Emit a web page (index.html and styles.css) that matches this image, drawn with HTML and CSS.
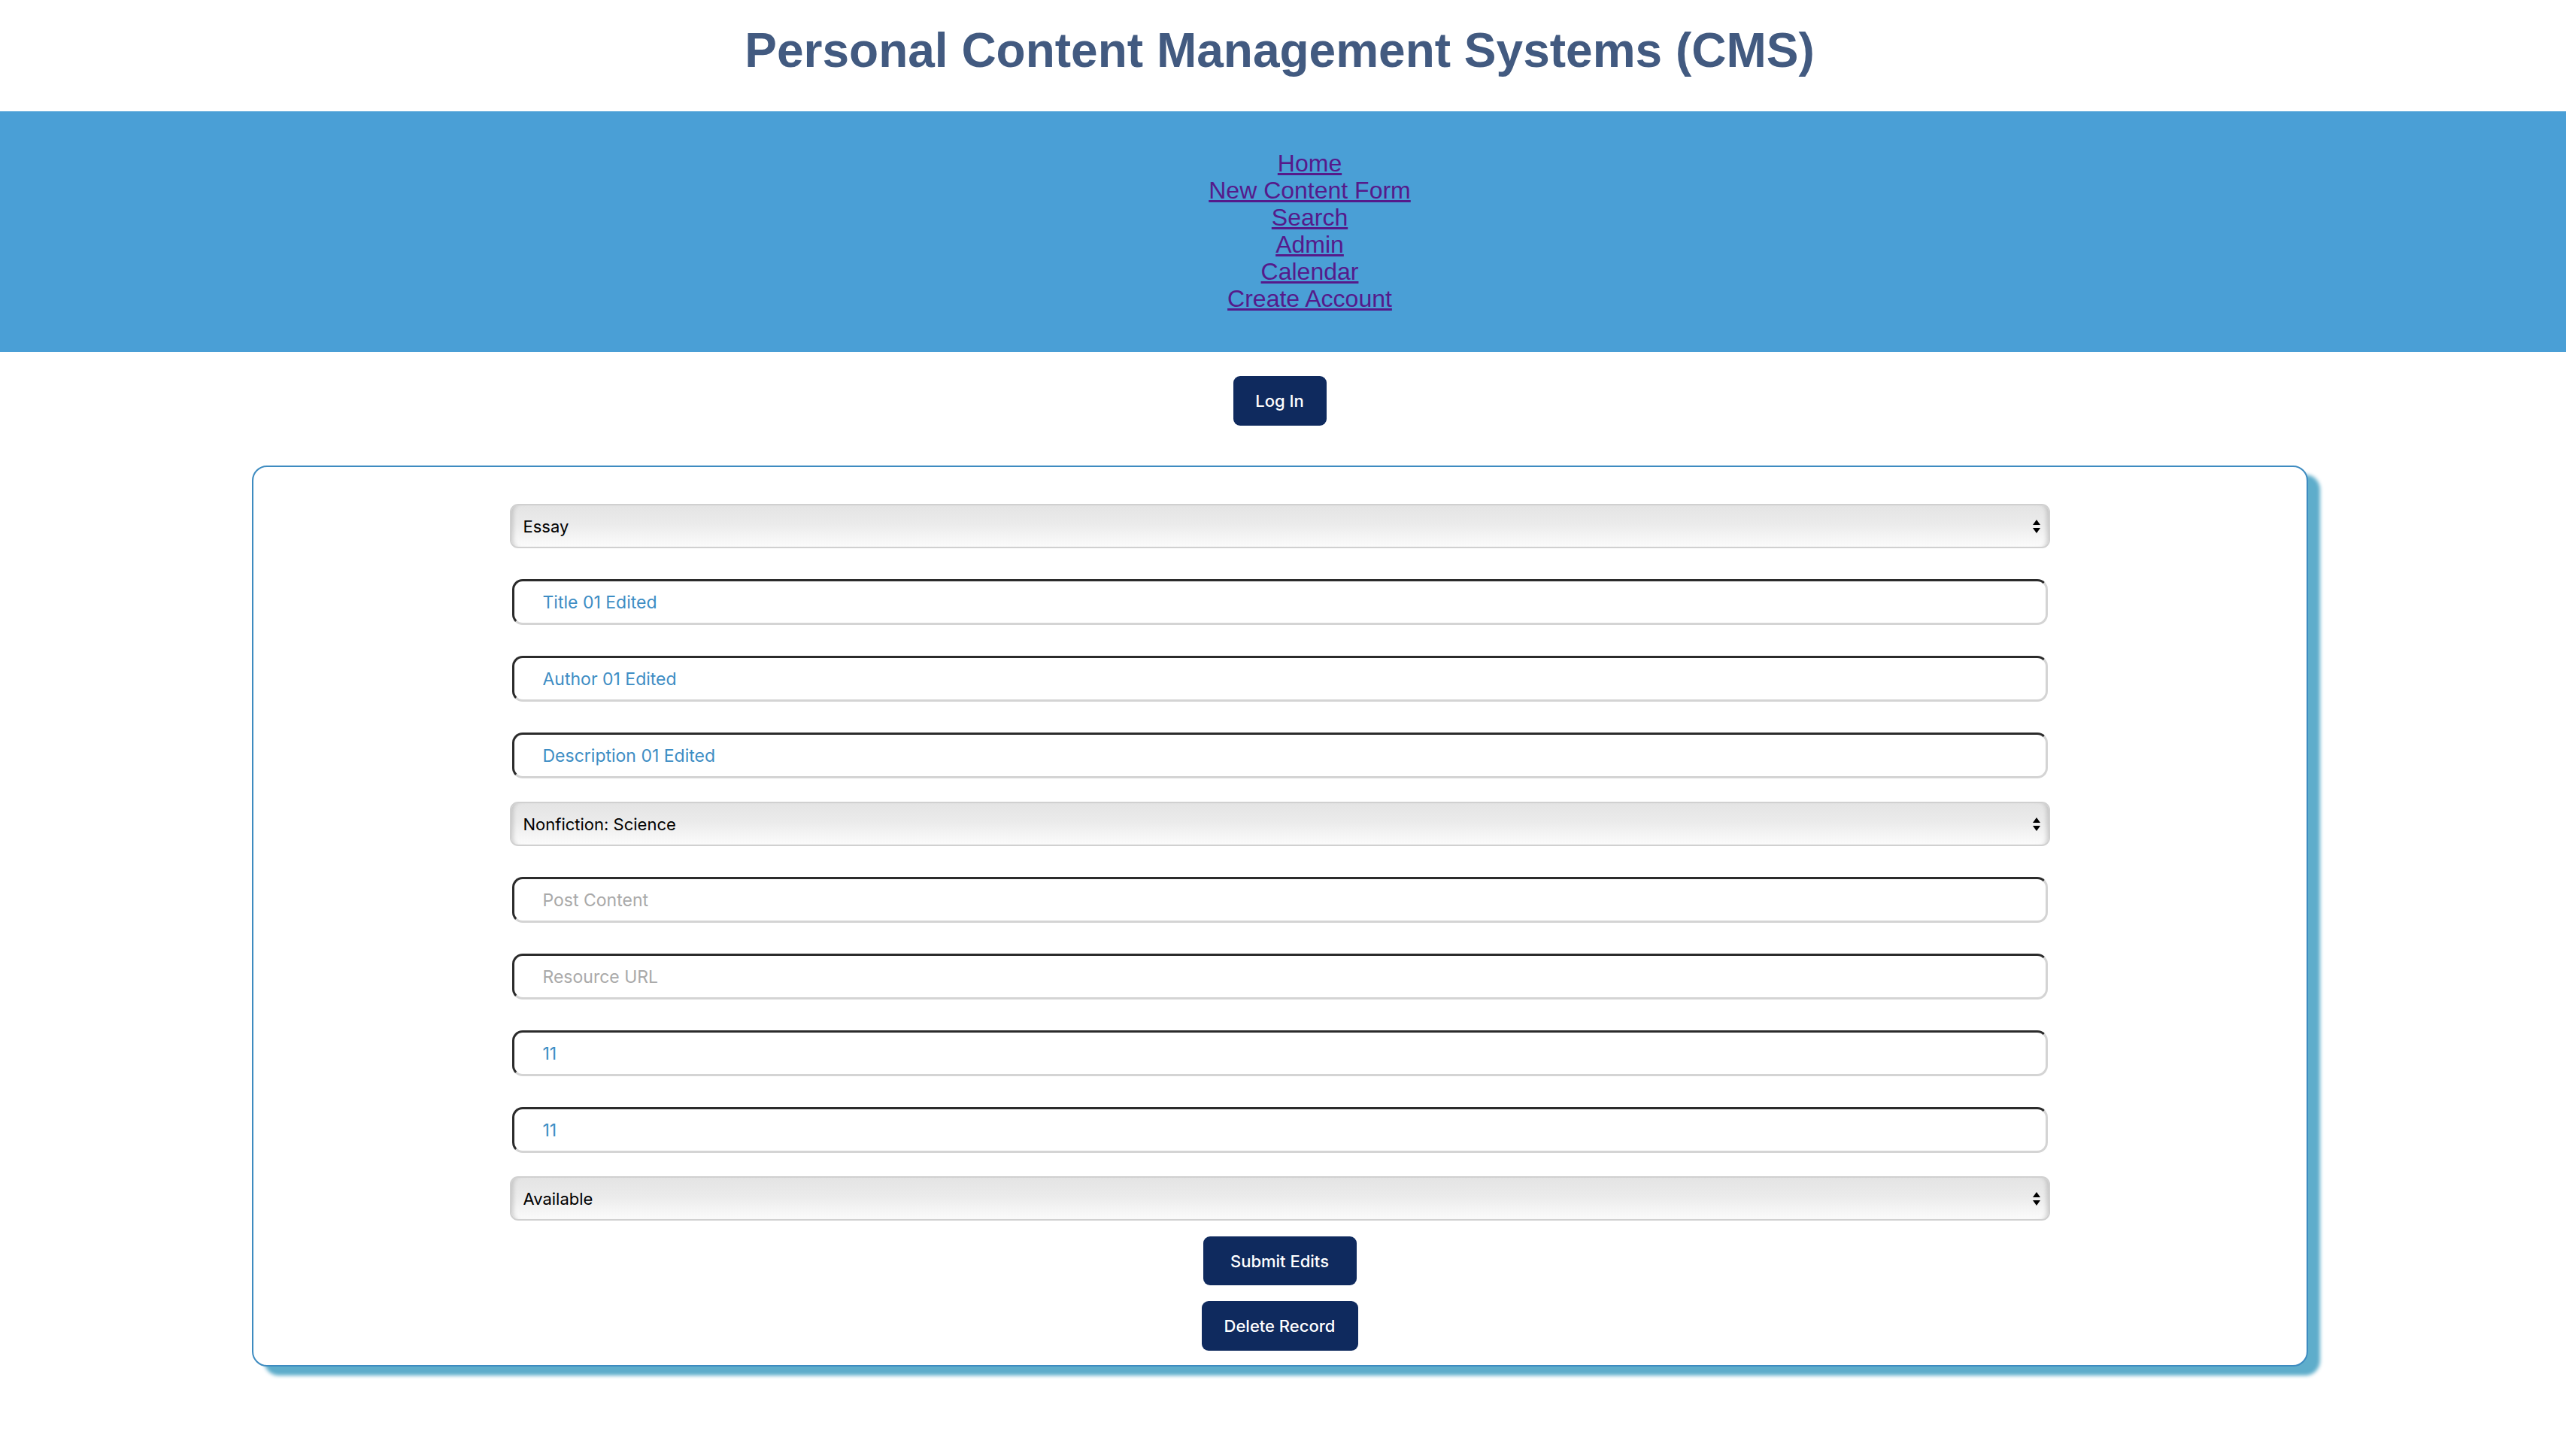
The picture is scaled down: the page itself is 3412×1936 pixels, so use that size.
FILE: index.html
```html
<!DOCTYPE html>
<html lang="en">
<head>
<meta charset="utf-8">
<title>Personal Content Management Systems (CMS)</title>
<link rel="stylesheet" href="styles.css">
</head>
<body>
<div class="page">
  <h1 class="site-title">Personal Content Management Systems (CMS)</h1>
  <nav class="main-nav">
    <ul class="nav-list">
      <li><a href="#">Home</a></li>
      <li><a href="#">New Content Form</a></li>
      <li><a href="#">Search</a></li>
      <li><a href="#">Admin</a></li>
      <li><a href="#">Calendar</a></li>
      <li><a href="#">Create Account</a></li>
    </ul>
  </nav>
  <div class="login-row">
    <button class="btn btn-login" type="button">Log In</button>
  </div>
  <main class="card">
    <form class="edit-form">
      <div class="select-wrap">
        <select class="field-select"><option>Essay</option></select>
        <svg class="select-arrows" width="10" height="18" viewBox="0 0 10 18"><path d="M5 0 L10 7 L0 7 Z M0 11 L10 11 L5 18 Z" fill="#000"/></svg>
      </div>
      <input class="field-input" type="text" value="Title 01 Edited">
      <input class="field-input" type="text" value="Author 01 Edited">
      <input class="field-input" type="text" value="Description 01 Edited">
      <div class="select-wrap">
        <select class="field-select"><option>Nonfiction: Science</option></select>
        <svg class="select-arrows" width="10" height="18" viewBox="0 0 10 18"><path d="M5 0 L10 7 L0 7 Z M0 11 L10 11 L5 18 Z" fill="#000"/></svg>
      </div>
      <input class="field-input" type="text" placeholder="Post Content">
      <input class="field-input" type="text" placeholder="Resource URL">
      <input class="field-input" type="text" value="11">
      <input class="field-input" type="text" value="11">
      <div class="select-wrap">
        <select class="field-select"><option>Available</option></select>
        <svg class="select-arrows" width="10" height="18" viewBox="0 0 10 18"><path d="M5 0 L10 7 L0 7 Z M0 11 L10 11 L5 18 Z" fill="#000"/></svg>
      </div>
      <button class="btn btn-submit" type="button">Submit Edits</button>
      <button class="btn btn-delete" type="button">Delete Record</button>
    </form>
  </main>
</div>
</body>
</html>
```
FILE: styles.css
```css
html, body {
  margin: 0;
  padding: 0;
  background: #ffffff;
}

body {
  font-family: "Liberation Sans", Arial, sans-serif;
}

.page {
  padding-right: 9px;
  padding-bottom: 80px;
}

.site-title {
  margin: 30px 0 44px;
  text-align: center;
  font-size: 64px;
  line-height: 74px;
  font-weight: bold;
  color: #425a80;
}

.main-nav {
  background: #4a9fd6;
  padding: 51px 9px 53px 0;
  margin-right: -9px;
}

.nav-list {
  list-style: none;
  margin: 0;
  padding: 0 0 0 80px;
  text-align: center;
  font-size: 32px;
  line-height: 36px;
}

.nav-list a {
  color: #551a8b;
}

.login-row {
  display: flex;
  justify-content: center;
  padding: 32px 0 53px;
}

.btn {
  background: #0f2a5e;
  color: #ffffff;
  border: 0;
  border-radius: 9px;
  font-family: Inter, "Noto Sans", sans-serif;
  font-weight: 500;
  font-size: 22px;
  height: 66px;
  padding: 0 30px;
  cursor: pointer;
}

.btn-login {
  width: 124px;
  padding: 0;
}

.card {
  box-sizing: content-box;
  width: 2730px;
  margin: 0 auto;
  border: 2px solid #3d8bc0;
  border-radius: 20px;
  box-shadow: 16px 12px 5px #5eadcb;
  background: #ffffff;
}

.edit-form {
  display: flex;
  flex-direction: column;
  align-items: center;
  padding: 49px 0 19px;
}

.select-wrap {
  position: relative;
  width: 2048px;
  height: 59px;
  margin-top: 31px;
}

.select-wrap:first-child {
  margin-top: 0;
}

.field-select {
  -webkit-appearance: none;
  appearance: none;
  box-sizing: border-box;
  width: 100%;
  height: 100%;
  margin: 0;
  padding: 0 40px 0 16px;
  border: 2px solid #d0d0d0;
  border-radius: 11px;
  background: linear-gradient(#e4e4e4 0%, #ebebeb 45%, #fbfbfb 100%);
  box-shadow: inset 7px 0 6px -5px rgba(0, 0, 0, 0.18), inset -7px 0 6px -5px rgba(0, 0, 0, 0.18);
  font-family: Inter, "Noto Sans", sans-serif;
  font-size: 22px;
  color: #000000;
}

.select-arrows {
  position: absolute;
  right: 13px;
  top: 21px;
  pointer-events: none;
}

.field-input {
  box-sizing: border-box;
  width: 2042px;
  height: 61px;
  margin: 41px 0 0;
  padding: 0 38px;
  border-style: solid;
  border-width: 3px;
  border-color: #2b2b2b #d4d4d4 #d4d4d4 #2b2b2b;
  border-radius: 14px;
  background: #ffffff;
  font-family: Inter, "Noto Sans", sans-serif;
  font-size: 23px;
  color: #3d8dc4;
  outline: none;
}

.field-input::placeholder {
  color: #a9a9a9;
}

.btn-submit {
  margin-top: 21px;
  width: 204px;
  height: 65px;
  padding: 0;
}

.btn-delete {
  margin-top: 21px;
  width: 208px;
  height: 66px;
  padding: 0;
}
```
